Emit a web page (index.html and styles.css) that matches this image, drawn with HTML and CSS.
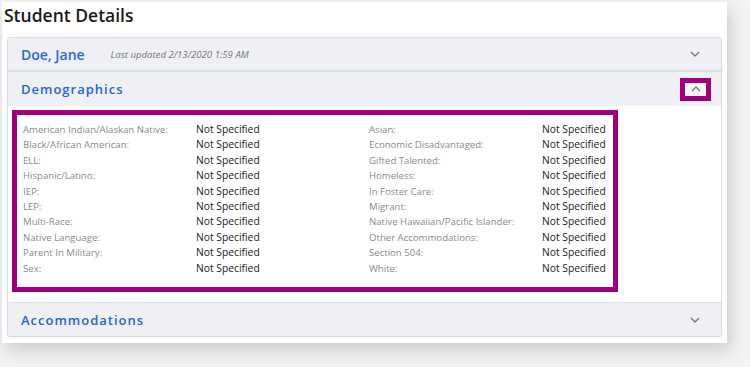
FILE: index.html
```html
<!DOCTYPE html>
<html>
<head>
<meta charset="utf-8">
<link rel="stylesheet" href="styles.css">
</head>
<body>
<div class="card">
  <h1 class="title">Student Details</h1>
  <div class="panel">
    <div class="head student">
      <span class="name">Doe, Jane</span>
      <span class="updated">Last updated 2/13/2020 1:59 AM</span>
      <span class="chev"><svg width="10" height="6" viewBox="0 0 10 6"><path d="M1 1 L5 5 L9 1" fill="none" stroke="#777" stroke-width="1.3"/></svg></span>
    </div>
    <div class="head section">
      <span class="sec-title">Demographics</span>
      <span class="chev boxed"><svg width="10" height="6" viewBox="0 0 10 6"><path d="M1 5 L5 1 L9 5" fill="none" stroke="#777" stroke-width="1.3"/></svg></span>
    </div>
    <div class="body">
      <div class="grid">
        <div class="col">
          <div class="row"><span class="lbl">American Indian/Alaskan Native:</span><span class="val">Not Specified</span></div>
          <div class="row"><span class="lbl">Black/African American:</span><span class="val">Not Specified</span></div>
          <div class="row"><span class="lbl">ELL:</span><span class="val">Not Specified</span></div>
          <div class="row"><span class="lbl">Hispanic/Latino:</span><span class="val">Not Specified</span></div>
          <div class="row"><span class="lbl">IEP:</span><span class="val">Not Specified</span></div>
          <div class="row"><span class="lbl">LEP:</span><span class="val">Not Specified</span></div>
          <div class="row"><span class="lbl">Multi-Race:</span><span class="val">Not Specified</span></div>
          <div class="row"><span class="lbl">Native Language:</span><span class="val">Not Specified</span></div>
          <div class="row"><span class="lbl">Parent In Military:</span><span class="val">Not Specified</span></div>
          <div class="row"><span class="lbl">Sex:</span><span class="val">Not Specified</span></div>
        </div>
        <div class="col">
          <div class="row"><span class="lbl">Asian:</span><span class="val">Not Specified</span></div>
          <div class="row"><span class="lbl">Economic Disadvantaged:</span><span class="val">Not Specified</span></div>
          <div class="row"><span class="lbl">Gifted Talented:</span><span class="val">Not Specified</span></div>
          <div class="row"><span class="lbl">Homeless:</span><span class="val">Not Specified</span></div>
          <div class="row"><span class="lbl">In Foster Care:</span><span class="val">Not Specified</span></div>
          <div class="row"><span class="lbl">Migrant:</span><span class="val">Not Specified</span></div>
          <div class="row"><span class="lbl">Native Hawaiian/Pacific Islander:</span><span class="val">Not Specified</span></div>
          <div class="row"><span class="lbl">Other Accommodations:</span><span class="val">Not Specified</span></div>
          <div class="row"><span class="lbl">Section 504:</span><span class="val">Not Specified</span></div>
          <div class="row"><span class="lbl">White:</span><span class="val">Not Specified</span></div>
        </div>
      </div>
    </div>
    <div class="head section last">
      <span class="sec-title">Accommodations</span>
      <span class="chev"><svg width="10" height="6" viewBox="0 0 10 6"><path d="M1 1 L5 5 L9 1" fill="none" stroke="#777" stroke-width="1.3"/></svg></span>
    </div>
  </div>
</div>
</body>
</html>
```
FILE: styles.css
```css
html, body {
  margin: 0;
  padding: 0;
}
body {
  background: #f3f3f3;
  width: 750px;
  height: 367px;
  overflow: hidden;
  padding: 2px 0 0 2px;
  box-sizing: border-box;
  font-family: "Open Sans", "Liberation Sans", sans-serif;
}
.card {
  width: 725px;
  height: 341px;
  background: #fff;
  box-shadow: 4px 8px 16px rgba(0, 0, 0, 0.16);
  padding: 0 5px 0 5px;
  box-sizing: border-box;
}
.title {
  margin: 0;
  font-size: 17.5px;
  font-weight: 600;
  color: #1a1a1a;
  line-height: 26px;
  margin-left: -3px;
  height: 35px;
}
.panel {
  border: 1px solid #d9dbe2;
  border-radius: 3px;
  width: 715px;
  box-sizing: border-box;
  box-shadow: 0 1px 2px rgba(0,0,0,0.06);
}
.head {
  display: flex;
  align-items: center;
  background: #eff0f4;
  padding: 0 10px 0 13px;
  box-sizing: border-box;
}
.student {
  height: 34px;
  border-bottom: 2px solid #dcdee6;
}
.section {
  height: 34px;
}
.last {
  border-top: 1px solid #dcdee6;
  height: 34px;
}
.name {
  font-size: 14px;
  font-weight: 600;
  color: #2f66d4;
}
.updated {
  font-size: 9.6px;
  font-style: italic;
  color: #777;
  margin-left: 26px;
}
.sec-title {
  font-size: 13px;
  font-weight: 600;
  color: #2a63cf;
  letter-spacing: 1px;
}
.chev {
  margin-left: auto;
  display: flex;
  align-items: center;
  justify-content: center;
  width: 22px;
  height: 14px;
  margin-right: 5px;
}
.chev.boxed {
  width: 21px;
  height: 13px;
  border: 5px solid #a0007a;
  background: #f6f6f8;
  margin-right: 0;
}
.body {
  background: #fff;
  padding: 4px 0 10px 4px;
}
.grid {
  width: 606px;
  height: 182px;
  box-sizing: border-box;
  border: 5px solid #a0007a;
  display: grid;
  grid-template-columns: 346px 1fr;
  padding: 7px 0 0 6px;
}
.row {
  display: grid;
  grid-template-columns: 173px 1fr;
  height: 15.4px;
  align-items: baseline;
}
.lbl {
  font-size: 9.6px;
  color: #8a8a8a;
  line-height: 15px;
  margin-top: -2px;
}
.val {
  font-size: 10.3px;
  color: #1a1a1a;
  line-height: 15px;
}
```
